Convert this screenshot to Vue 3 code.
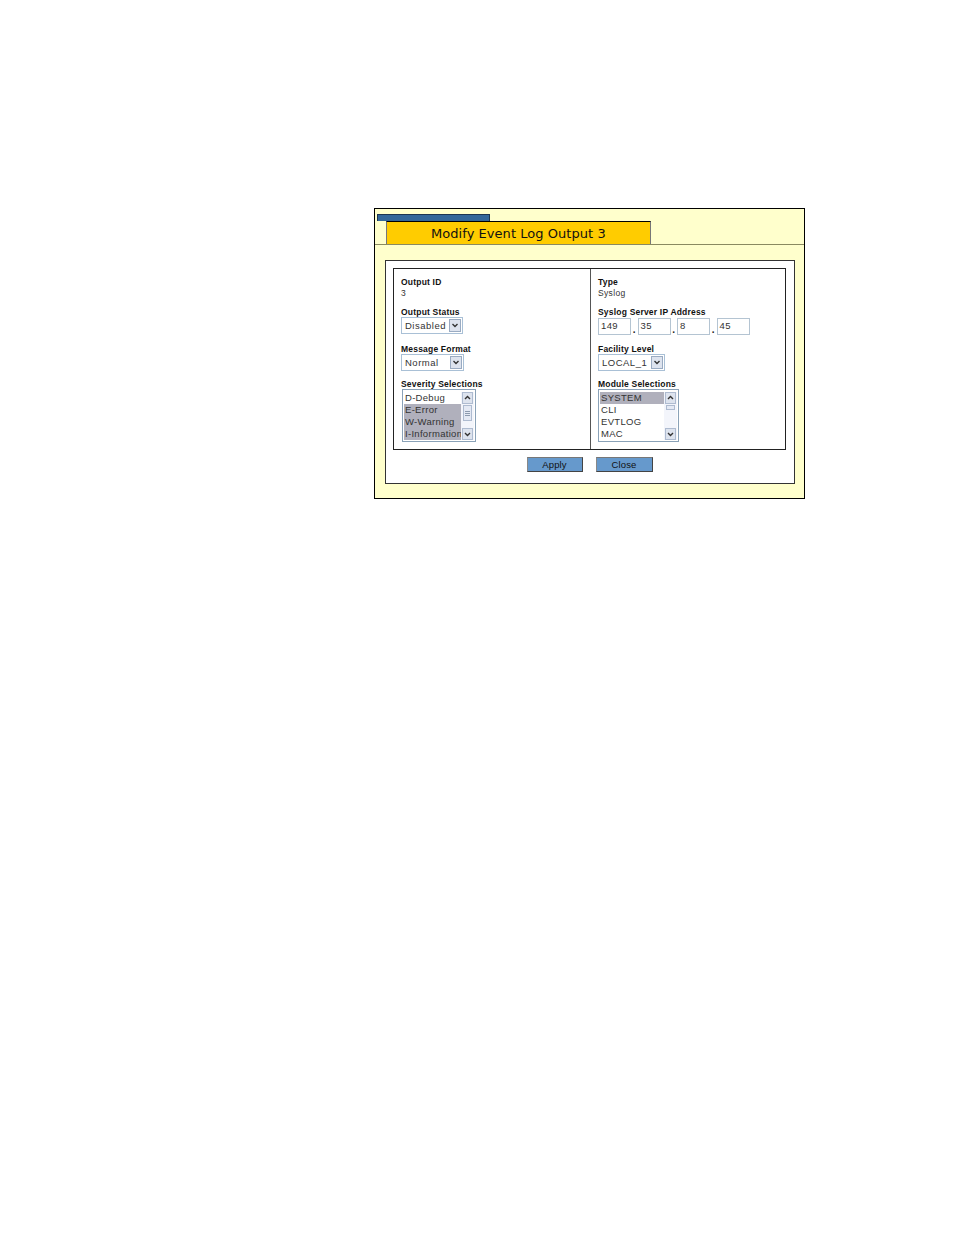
<script setup>
const severity = [
  { text: 'D-Debug', selected: false },
  { text: 'E-Error', selected: true },
  { text: 'W-Warning', selected: true },
  { text: 'I-Information', selected: true }
]
const modules = [
  { text: 'SYSTEM', selected: true },
  { text: 'CLI', selected: false },
  { text: 'EVTLOG', selected: false },
  { text: 'MAC', selected: false }
]
const octets = ['149', '35', '8', '45']
</script>

<template>
  <div class="page">
    <section class="panel">
      <div class="strip"></div>
      <header class="head">
        <h1 class="title">Modify Event Log Output 3</h1>
      </header>
      <div class="card">
        <div class="table">
          <div class="col col-left">
            <div class="field f-id">
              <div class="label">Output ID</div>
              <div class="value">3</div>
            </div>
            <div class="field f-status">
              <div class="label">Output Status</div>
              <div class="select s-disabled">
                <span class="sel-text">Disabled</span>
                <span class="arrow"><svg viewBox="0 0 10 11" width="10" height="11"><path d="M2.5 4 L5 6.5 L7.5 4" fill="none" stroke="#333" stroke-width="1.4"/></svg></span>
              </div>
            </div>
            <div class="field f-format">
              <div class="label">Message Format</div>
              <div class="select s-normal">
                <span class="sel-text">Normal</span>
                <span class="arrow"><svg viewBox="0 0 10 11" width="10" height="11"><path d="M2.5 4 L5 6.5 L7.5 4" fill="none" stroke="#333" stroke-width="1.4"/></svg></span>
              </div>
            </div>
            <div class="field f-list">
              <div class="label">Severity Selections</div>
              <div class="listbox lb-sev">
                <div class="options">
                  <div v-for="o in severity" :key="o.text" class="opt" :class="{ on: o.selected }">{{ o.text }}</div>
                </div>
                <div class="scroll">
                  <span class="sbtn"><svg viewBox="0 0 9 10" width="9" height="10"><path d="M2 6 L4.5 3.5 L7 6" fill="none" stroke="#333" stroke-width="1.4"/></svg></span>
                  <span class="track"><span class="thumb sev-thumb"><i></i><i></i><i></i></span></span>
                  <span class="sbtn"><svg viewBox="0 0 9 10" width="9" height="10"><path d="M2 4 L4.5 6.5 L7 4" fill="none" stroke="#333" stroke-width="1.4"/></svg></span>
                </div>
              </div>
            </div>
          </div>
          <div class="col col-right">
            <div class="field f-id">
              <div class="label">Type</div>
              <div class="value">Syslog</div>
            </div>
            <div class="field f-status">
              <div class="label">Syslog Server IP Address</div>
              <div class="ip">
                <template v-for="(o, i) in octets" :key="i">
                  <span class="octet">{{ o }}</span>
                  <span v-if="i < 3" class="dot">.</span>
                </template>
              </div>
            </div>
            <div class="field f-format">
              <div class="label">Facility Level</div>
              <div class="select s-local">
                <span class="sel-text">LOCAL_1</span>
                <span class="arrow"><svg viewBox="0 0 10 11" width="10" height="11"><path d="M2.5 4 L5 6.5 L7.5 4" fill="none" stroke="#333" stroke-width="1.4"/></svg></span>
              </div>
            </div>
            <div class="field f-list">
              <div class="label">Module Selections</div>
              <div class="listbox lb-mod">
                <div class="options">
                  <div v-for="o in modules" :key="o.text" class="opt" :class="{ on: o.selected }">{{ o.text }}</div>
                </div>
                <div class="scroll">
                  <span class="sbtn"><svg viewBox="0 0 9 10" width="9" height="10"><path d="M2 6 L4.5 3.5 L7 6" fill="none" stroke="#333" stroke-width="1.4"/></svg></span>
                  <span class="track"><span class="thumb mod-thumb"></span></span>
                  <span class="sbtn"><svg viewBox="0 0 9 10" width="9" height="10"><path d="M2 4 L4.5 6.5 L7 4" fill="none" stroke="#333" stroke-width="1.4"/></svg></span>
                </div>
              </div>
            </div>
          </div>
        </div>
        <div class="actions">
          <button class="btn btn-apply" type="button">Apply</button>
          <button class="btn btn-close" type="button">Close</button>
        </div>
      </div>
    </section>
  </div>
</template>

<style scoped>
.page {
  width: 954px;
  height: 1235px;
  box-sizing: border-box;
  padding: 208px 0 0 374px;
  background: #fff;
  font-family: "Liberation Sans", Arial, sans-serif;
}
.panel {
  width: 431px;
  height: 291px;
  box-sizing: border-box;
  border: 1px solid #000;
  background: #ffffcc;
  padding-top: 5px;
}
.strip {
  width: 113px;
  height: 7px;
  margin-left: 2px;
  box-sizing: border-box;
  background: #336699;
  border: 1px solid #1d3550;
  border-bottom: 0;
}
.head {
  height: 24px;
  box-sizing: border-box;
  border-bottom: 1px solid #8a8a60;
}
.title {
  width: 265px;
  height: 23px;
  margin: 0 0 0 11px;
  box-sizing: border-box;
  background: #ffcc00;
  border: 1px solid #777;
  border-top-color: #000;
  border-bottom: 0;
  padding-left: 44px;
  font: 400 13px/23px "DejaVu Sans", Verdana, sans-serif;
  letter-spacing: 0.05px;
  color: #111;
}
.card {
  width: 410px;
  height: 224px;
  margin: 15px 0 0 10px;
  box-sizing: border-box;
  background: #fff;
  border: 1px solid #333;
  padding: 7px;
}
.table {
  display: grid;
  grid-template-columns: 197px 1fr;
  width: 393px;
  height: 182px;
  box-sizing: border-box;
  border: 1px solid #222;
}
.col-left {
  border-right: 1px solid #555;
  padding-left: 7px;
}
.col-right {
  padding-left: 7px;
}
.field {
  display: flex;
  flex-direction: column;
}
.f-id { margin-top: 8px; }
.f-status { margin-top: 8px; }
.f-format { margin-top: 10px; }
.f-list { margin-top: 8px; }
.label {
  font-size: 8.5px;
  line-height: 11px;
  font-weight: 700;
  color: #111;
  letter-spacing: 0.2px;
  white-space: nowrap;
}
.value {
  font-size: 8.5px;
  line-height: 11px;
  color: #333;
  letter-spacing: 0.35px;
}
.select {
  display: flex;
  align-items: center;
  justify-content: space-between;
  height: 17px;
  box-sizing: border-box;
  margin-top: -1px;
  border: 1px solid #a9c0d6;
  background: #fff;
  padding: 0 1px 0 3px;
}
.s-disabled { width: 62px; }
.s-normal { width: 63px; }
.s-local { width: 67px; }
.sel-text {
  font-size: 9.5px;
  color: #333;
  letter-spacing: 0.5px;
  white-space: nowrap;
}
.arrow {
  display: block;
  width: 12px;
  height: 13px;
  box-sizing: border-box;
  background: #dde3ee;
  border: 1px solid #9aabc2;
  overflow: hidden;
}
.arrow svg {
  display: block;
}
.ip {
  display: flex;
  align-items: flex-end;
  margin-bottom: -1px;
}
.octet {
  display: block;
  width: 33px;
  height: 17px;
  box-sizing: border-box;
  border: 1px solid #b4c4d2;
  padding-left: 2px;
  font-size: 9.5px;
  line-height: 14px;
  letter-spacing: 0.4px;
  color: #333;
  background: #fff;
}
.dot {
  width: 6.5px;
  text-align: center;
  font-size: 10px;
  font-weight: 700;
  line-height: 11px;
  color: #222;
}
.listbox {
  display: flex;
  height: 53px;
  box-sizing: border-box;
  margin-top: -1px;
  border: 1px solid #8aa2b8;
  padding: 2px 1px 1px;
  background: #fff;
}
.lb-sev {
  width: 74px;
  margin-left: 1px;
}
.lb-mod { width: 81px; }
.options {
  flex: 1;
  min-width: 0;
}
.opt {
  height: 12px;
  padding-left: 1px;
  font-size: 9.5px;
  line-height: 12px;
  letter-spacing: 0.3px;
  color: #333;
  white-space: nowrap;
}
.opt.on {
  background: #b0b0bc;
}
.scroll {
  display: flex;
  flex: none;
  flex-direction: column;
  width: 13px;
  background: #f3f5fb;
}
.sbtn {
  display: block;
  flex: none;
  width: 11px;
  height: 12px;
  margin: 0 1px;
  box-sizing: border-box;
  background: #dde3ee;
  border: 1px solid #aebbd0;
  overflow: hidden;
}
.sbtn svg {
  display: block;
}
.track {
  flex: 1;
  display: block;
}
.thumb {
  display: block;
  width: 9px;
  margin: 1px 2px;
  box-sizing: border-box;
  background: #e4e9f4;
  border: 1px solid #aebbd0;
}
.sev-thumb {
  display: flex;
  flex-direction: column;
  justify-content: center;
  gap: 1px;
  height: 16px;
  padding: 0 1px;
}
.sev-thumb i {
  display: block;
  height: 1px;
  background: #8c9aae;
}
.mod-thumb {
  height: 5px;
}
.actions {
  display: flex;
  justify-content: center;
  gap: 13px;
  margin-top: 7px;
  padding-right: 1px;
}
.btn {
  width: 56px;
  height: 15px;
  box-sizing: border-box;
  padding: 0;
  background: #6699cc;
  border: 1px solid #444;
  border-top-color: #777;
  border-left-color: #888;
  font-family: "Liberation Sans", Arial, sans-serif;
  font-size: 9.5px;
  line-height: 13px;
  letter-spacing: 0.1px;
  color: #111;
}
.btn-close {
  width: 57px;
}
</style>

<style>
html, body {
  margin: 0;
  background: #fff;
}
</style>
